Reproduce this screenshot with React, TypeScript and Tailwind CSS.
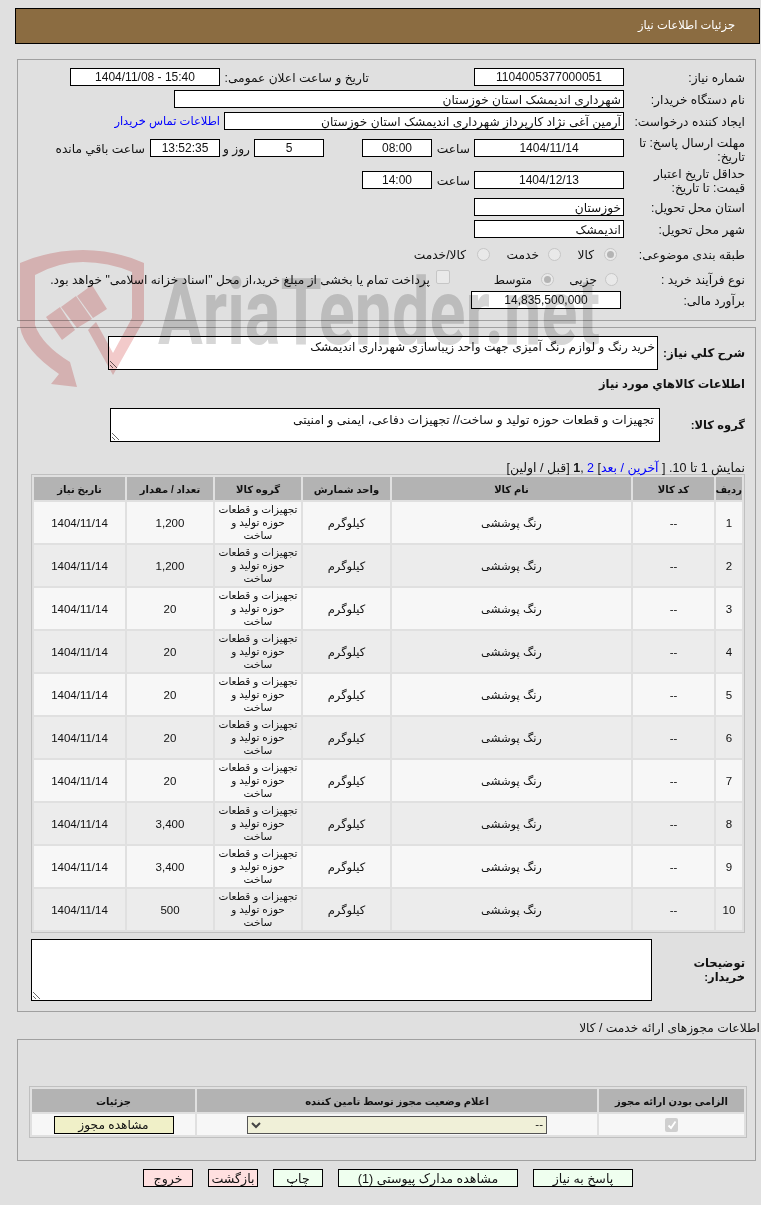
import { type ReactNode } from "react";

const rows = [
	["1", "1,200"],
	["2", "1,200"],
	["3", "20"],
	["4", "20"],
	["5", "20"],
	["6", "20"],
	["7", "20"],
	["8", "3,400"],
	["9", "3,400"],
	["10", "500"],
];

function Field({ className = "", children }: { className?: string; children?: ReactNode }) {
	return (
		<div className={`flex h-[18px] shrink-0 items-center whitespace-nowrap border border-black bg-white px-[2px] leading-none ${className}`}>
			{children}
		</div>
	);
}

function Label({ className = "w-[121px] pt-[2px]", children }: { className?: string; children: ReactNode }) {
	return <div className={`shrink-0 leading-[14px] ${className}`}>{children}</div>;
}

function Radio({ checked }: { checked?: boolean }) {
	return (
		<span className="flex h-[13px] w-[13px] shrink-0 items-center justify-center rounded-full border border-[#c6c6c6] bg-[#e9e9e9]">
			{checked && <span className="h-[7px] w-[7px] rounded-full bg-[#b4b4b4]" />}
		</span>
	);
}

function Watermark() {
	return (
		<div dir="ltr" className="pointer-events-none absolute left-0 top-0 h-[400px] w-[761px] mix-blend-multiply">
			<svg width="150" height="400" viewBox="0 0 150 400" className="absolute left-0 top-0">
				<g fill="#f2caca">
					<path d="M20 263 Q50 250 83 250 Q115 250 144 263 V320 L113 375 L88 330 L96 322 L113 353 L132 318 V272 Q108 262 83 262 Q58 262 35 275 V325 Q42 345 70 362 L77 387 L51 384 L59 374 Q24 350 20 327 Z" />
					<path d="M46 317 L60 307 L75 330 L62 340 Z" />
					<path d="M61 307 L76 296 L92 319 L77 328 Z" />
					<path d="M77 296 L92 285 L107 309 L93 318 Z" />
				</g>
			</svg>
			<div className="absolute left-[158px] top-[267px] origin-top-left scale-x-[0.724] whitespace-nowrap font-['Roboto',sans-serif] text-[92px] font-bold leading-none text-[#d6d6d6]">
				AriaTender.net
			</div>
		</div>
	);
}

function Th({ children }: { children: ReactNode }) {
	return <th className="bg-[#b3b3b3] p-0 pt-[1px] text-center text-[10px] font-bold">{children}</th>;
}

function Td({ className = "", children }: { className?: string; children: ReactNode }) {
	return <td className={`p-0 pt-[2px] text-center text-[11.5px] leading-[13px] ${className}`}>{children}</td>;
}

function Action({ className, children }: { className: string; children: ReactNode }) {
	return (
		<button type="button" className={`h-[18px] shrink-0 border border-black pt-[2px] text-[12.6px] leading-none text-[#111] ${className}`}>
			{children}
		</button>
	);
}

export default function App() {
	return (
		<div dir="rtl" className="relative h-[1205px] w-[761px] overflow-hidden bg-[#e0e0e0] font-['Liberation_Sans','DejaVu_Sans',sans-serif] text-[12.2px] text-[#111]">
			{/* header */}
			<div className="ml-[15px] mr-[1px] mt-[8px] flex h-[36px] items-center border border-black bg-[#8b6c41] pr-[24px] text-[11.5px] text-white">
				جزئیات اطلاعات نیاز
			</div>

			{/* main form */}
			<div className="ml-[17px] mr-[5px] mt-[15px] h-[262px] border border-[#a0a0a0] pr-[10px] pt-[8px]">
				<div className="flex h-[18px] items-center">
					<Label>شماره نیاز:</Label>
					<Field className="w-[150px] justify-center text-[12px]">1104005377000051</Field>
					<Label className="mr-[105px] w-[149px] whitespace-nowrap pt-[2px]">تاریخ و ساعت اعلان عمومی:</Label>
					<Field className="w-[150px] justify-center text-[12px]">
						<span dir="ltr">1404/11/08 - 15:40</span>
					</Field>
				</div>
				<div className="mt-[4px] flex h-[18px] items-center">
					<Label>نام دستگاه خریدار:</Label>
					<Field className="w-[450px] pt-[2px]">شهرداری اندیمشک استان خوزستان</Field>
				</div>
				<div className="mt-[4px] flex h-[18px] items-center">
					<Label>ایجاد کننده درخواست:</Label>
					<Field className="w-[400px] pt-[2px]">آرمین آغی نژاد کارپرداز شهرداری اندیمشک استان خوزستان</Field>
					<span className="mr-[4px] whitespace-nowrap pt-[2px] text-[11.5px] text-[#0000ff]">اطلاعات تماس خریدار</span>
				</div>
				<div className="mt-[3px] flex h-[30px] items-center">
					<Label className="w-[121px] pl-[6px] pt-[4px]">مهلت ارسال پاسخ: تا تاریخ:</Label>
					<Field className="w-[150px] justify-center text-[12px]">1404/11/14</Field>
					<span className="mr-[4px] w-[38px] shrink-0 pt-[3px]">ساعت</span>
					<Field className="w-[70px] justify-center text-[12px]">08:00</Field>
					<Field className="mr-[38px] w-[70px] justify-center text-[12px]">5</Field>
					<span className="mr-[4px] w-[30px] shrink-0 pt-[3px]">روز و</span>
					<Field className="w-[70px] justify-center border-[#888] bg-[#eeeecc] text-[12px]">13:52:35</Field>
					<span className="mr-[5px] whitespace-nowrap pt-[3px]">ساعت باقي مانده</span>
				</div>
				<div className="mt-[2px] flex h-[30px] items-center">
					<Label className="w-[121px] pl-[6px] pt-[2px]">حداقل تاریخ اعتبار قیمت: تا تاریخ:</Label>
					<Field className="w-[150px] justify-center text-[12px]">1404/12/13</Field>
					<span className="mr-[4px] w-[38px] shrink-0 pt-[3px]">ساعت</span>
					<Field className="w-[70px] justify-center text-[12px]">14:00</Field>
				</div>
				<div className="mt-[3px] flex h-[18px] items-center">
					<Label>استان محل تحویل:</Label>
					<Field className="w-[150px] pt-[2px]">خوزستان</Field>
				</div>
				<div className="mt-[4px] flex h-[18px] items-center">
					<Label>شهر محل تحویل:</Label>
					<Field className="w-[150px] pt-[2px]">اندیمشک</Field>
				</div>
				<div className="mt-[7px] flex h-[18px] items-center">
					<Label>طبقه بندی موضوعی:</Label>
					<span className="mr-[7px]"><Radio checked /></span>
					<span className="mr-[10px] w-[33px] shrink-0 pt-[2px]">کالا</span>
					<Radio />
					<span className="mr-[9px] w-[49px] shrink-0 pt-[2px]">خدمت</span>
					<Radio />
					<span className="mr-[11px] whitespace-nowrap pt-[2px]">کالا/خدمت</span>
				</div>
				<div className="mt-[7px] flex h-[18px] items-center">
					<Label>نوع فرآیند خرید :</Label>
					<span className="mr-[6px]"><Radio /></span>
					<span className="mr-[8px] w-[43px] shrink-0 pt-[3px]">جزیی</span>
					<Radio checked />
					<span className="mr-[9px] w-[82px] shrink-0 pt-[3px]">متوسط</span>
					<span className="mb-[4px] h-[14px] w-[14px] shrink-0 rounded-[2px] border border-[#c6c6c6] bg-[#e9e9e9]" />
					<span className="mr-[6px] whitespace-nowrap pt-[2px]">پرداخت تمام یا بخشی از مبلغ خرید،از محل "اسناد خزانه اسلامی" خواهد بود.</span>
				</div>
				<div className="mt-[3px] flex h-[18px] items-center">
					<Label className="w-[124px] pt-[2px]">برآورد مالی:</Label>
					<Field className="w-[150px] justify-center text-[12px]">14,835,500,000</Field>
				</div>
			</div>

			{/* goods */}
			<div className="ml-[17px] mr-[5px] mt-[6px] h-[685px] border border-[#a0a0a0] pr-[10px] pt-[8px]">
				<div className="flex items-center">
					<Label className="w-[87px] text-[11.8px] font-bold">شرح کلي نياز:</Label>
					<textarea
						readOnly
						className="h-[34px] w-[550px] resize border border-black bg-white px-[2px] pt-[3px] text-[12.1px] leading-[14px] outline-none"
						defaultValue="خرید رنگ و لوازم رنگ آمیزی جهت واحد زیباسازی شهرداری اندیمشک"
					/>
				</div>
				<div className="mt-[7px] h-[14px] text-[11.5px] font-bold leading-[14px]">اطلاعات کالاهاي مورد نياز</div>
				<div className="mt-[17px] flex items-center">
					<Label className="w-[85px] text-[11.5px] font-bold">گروه کالا:</Label>
					<textarea
						readOnly
						className="h-[34px] w-[550px] resize border border-black bg-white pl-[2px] pr-[5px] pt-[4px] text-[12.2px] leading-[14px] outline-none"
						defaultValue="تجهیزات و قطعات حوزه تولید و ساخت// تجهیزات دفاعی، ایمنی و امنیتی"
					/>
				</div>
				<div className="mt-[19px] h-[13px] text-[12.5px] leading-[14px]">
					نمایش 1 تا 10. [ <span className="text-[#0000ff]">آخرین / بعد</span>] <span className="text-[#0000ff]">2</span> ,<b>1</b> [قبل / اولین]
				</div>
				<table className="w-[714px] table-fixed border-separate border-spacing-[2px] border border-[#c0c0c0]">
					<colgroup>
						<col className="w-[26px]" />
						<col className="w-[81px]" />
						<col className="w-[239px]" />
						<col className="w-[87px]" />
						<col className="w-[86px]" />
						<col className="w-[86px]" />
						<col className="w-[91px]" />
					</colgroup>
					<thead>
						<tr className="h-[23px]">
							<Th>ردیف</Th>
							<Th>کد کالا</Th>
							<Th>نام کالا</Th>
							<Th>واحد شمارش</Th>
							<Th>گروه کالا</Th>
							<Th>تعداد / مقدار</Th>
							<Th>تاریخ نیاز</Th>
						</tr>
					</thead>
					<tbody>
						{rows.map(([no, amount], i) => (
							<tr key={no} className={`h-[41px] ${i % 2 === 0 ? "bg-[#f7f7f7]" : "bg-[#ececec]"}`}>
								<Td>{no}</Td>
								<Td>--</Td>
								<Td>رنگ پوششی</Td>
								<Td>کیلوگرم</Td>
								<Td className="whitespace-nowrap !pt-0 !text-[10.5px]">
									تجهیزات و قطعات
									<br />
									حوزه تولید و
									<br />
									ساخت
								</Td>
								<Td>{amount}</Td>
								<Td>1404/11/14</Td>
							</tr>
						))}
					</tbody>
				</table>
				<div className="mt-[6px] flex items-center">
					<Label className="w-[93px] pl-[30px] text-[11.5px] font-bold">توضیحات خریدار:</Label>
					<textarea readOnly className="h-[62px] w-[621px] resize border border-black bg-white outline-none" />
				</div>
			</div>

			{/* licences */}
			<div className="mt-[9px] h-[14px] whitespace-nowrap pr-[1px] leading-[14px]">اطلاعات مجوزهای ارائه خدمت / کالا</div>
			<div className="ml-[17px] mr-[5px] mt-[4px] h-[122px] border border-[#a0a0a0] pr-[8px] pt-[46px]">
				<table className="w-[718px] table-fixed border-separate border-spacing-[2px] border border-[#c0c0c0]">
					<colgroup>
						<col className="w-[145px]" />
						<col className="w-[400px]" />
						<col className="w-[163px]" />
					</colgroup>
					<thead>
						<tr className="h-[23px]">
							<Th>الزامی بودن ارائه مجوز</Th>
							<Th>اعلام وضعیت مجوز توسط تامین کننده</Th>
							<Th>جزئیات</Th>
						</tr>
					</thead>
					<tbody>
						<tr className="h-[21px] bg-[#f7f7f7]">
							<Td className="!pt-0">
								<span className="inline-flex h-[14px] w-[13px] items-center justify-center rounded-[2px] bg-[#cfcfcf] align-middle">
									<svg width="10" height="10" viewBox="0 0 10 10">
										<path d="M1.5 5.5 L4 8 L8.5 1.5" fill="none" stroke="#fff" strokeWidth="1.8" />
									</svg>
								</span>
							</Td>
							<Td className="!pt-0">
								<div className="mx-auto flex h-[18px] w-[300px] items-center justify-between border border-[#555] bg-[#f0f0d8] px-[3px]">
									<span>--</span>
									<svg width="10" height="8" viewBox="0 0 10 8">
										<path d="M1 2 L5 6 L9 2" fill="none" stroke="#444" strokeWidth="2" />
									</svg>
								</div>
							</Td>
							<Td className="!pt-0">
								<button type="button" className="h-[18px] w-[120px] border border-black bg-[#f0f0c8] pt-[2px] text-[12.2px] leading-none">
									مشاهده مجوز
								</button>
							</Td>
						</tr>
					</tbody>
				</table>
			</div>

			{/* actions */}
			<div className="mt-[8px] flex gap-[15px] pr-[128px]">
				<Action className="w-[100px] bg-[#efffef]">پاسخ به نیاز</Action>
				<Action className="w-[180px] bg-[#efffef]">مشاهده مدارک پیوستی (1)</Action>
				<Action className="w-[50px] bg-[#efffef]">چاپ</Action>
				<Action className="w-[50px] bg-[#ffe0e0]">بازگشت</Action>
				<Action className="w-[50px] bg-[#ffe0e0]">خروج</Action>
			</div>

			<Watermark />
		</div>
	);
}
